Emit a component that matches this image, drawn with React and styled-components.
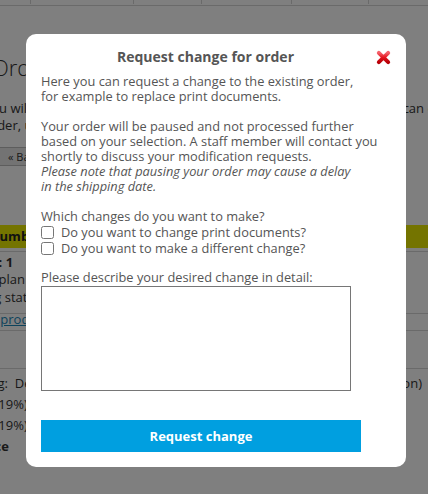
import React from 'react';
import styled, { createGlobalStyle } from "styled-components";

const GlobalStyle = createGlobalStyle`
    html, body {
        margin: 0;
        padding: 0;
        background: #ffffff;
        overflow: hidden;
    }
    body {
        font-family: "Open Sans", "Liberation Sans", sans-serif;
        color: #333;
    }
`;

function CloseIcon() {
    return (
        <svg width="15" height="15" viewBox="0 0 16 16">
            <defs>
                <linearGradient id="xg" x1="0" y1="0" x2="0" y2="1">
                    <stop offset="0" stopColor="#f4606a" />
                    <stop offset="0.5" stopColor="#e4141e" />
                    <stop offset="1" stopColor="#b80008" />
                </linearGradient>
            </defs>
            <path d="M3 3 L13 13 M13 3 L3 13" stroke="url(#xg)" strokeWidth="4.2" strokeLinecap="round" />
        </svg>
    )
}

// the order page that sits behind the dialog (scrolled a little to the right)
function BackgroundPage() {
    return (
        <Page>
            <HeaderTable>
                <HeaderCell $w={47} />
                <HeaderCell $w={103} />
                <HeaderCell $w={68} />
                <HeaderCell $w={90} />
                <HeaderCell $w={77} />
                <HeaderCell $w={95} />
            </HeaderTable>
            <PageTitle>Order details</PageTitle>
            <Intro>
                You will find all information about your order below. If you want, you can change your<br />
                order, upload new print documents or contact our service.
            </Intro>
            <BackButton>« Back</BackButton>
            <TableHead>Number</TableHead>
            <InfoBlock>
                <InfoLine $bold $shift={-4}>No: 1</InfoLine>
                <InfoLine $shift={-18}>Flyer plan A5</InfoLine>
                <InfoLine $shift={-30}>Printing status</InfoLine>
            </InfoBlock>
            <LinkRow><a>To product</a></LinkRow>
            <Spacer />
            <PriceTable>
                <PriceRow>
                    <PriceLabel $shift={-32}>Shipping:&nbsp; Deutsche Post</PriceLabel>
                    <span>(Standard option)</span>
                </PriceRow>
                <PriceRow><PriceLabel $shift={-16}>VAT (19%)</PriceLabel></PriceRow>
                <PriceRow><PriceLabel $shift={-16}>VAT (19%)</PriceLabel></PriceRow>
                <PriceRow $bold><PriceLabel $shift={-44}>Total price</PriceLabel></PriceRow>
            </PriceTable>
        </Page>
    )
}

function App() {
    return (
        <>
            <GlobalStyle />
            <BackgroundPage />
            <Overlay>
                <Modal>
                    <ModalHeader>
                        <ModalTitle>Request change for order</ModalTitle>
                        <CloseButton aria-label="close"><CloseIcon /></CloseButton>
                    </ModalHeader>
                    <Text>
                        Here you can request a change to the existing order,<br />
                        for example to replace print documents.
                    </Text>
                    <Text>
                        Your order will be paused and not processed further<br />
                        based on your selection. A staff member will contact you<br />
                        shortly to discuss your modification requests.<br />
                        <em>Please note that pausing your order may cause a delay<br />
                        in the shipping date.</em>
                    </Text>
                    <Text>
                        Which changes do you want to make?
                        <CheckRow>
                            <input type="checkbox" />
                            <span>Do you want to change print documents?</span>
                        </CheckRow>
                        <CheckRow>
                            <input type="checkbox" />
                            <span>Do you want to make a different change?</span>
                        </CheckRow>
                    </Text>
                    <FieldLabel>Please describe your desired change in detail:</FieldLabel>
                    <TextArea />
                    <SubmitButton>Request change</SubmitButton>
                </Modal>
            </Overlay>
        </>
    )
}

const Page = styled.div`
    width: 480px;
    margin-left: -16px;
    font-size: 13px;
    color: #333;
`;

const HeaderTable = styled.div`
    display: flex;
    height: 5px;
    border-bottom: 1px solid #d4d4d4;
`;

const HeaderCell = styled.div`
    width: ${p => p.$w}px;
    height: 4px;
    border-right: 1px solid #d4d4d4;
`;

const PageTitle = styled.h1`
    margin: 46px 0 0 8px;
    font-size: 22px;
    font-weight: 300;
    line-height: 30px;
    color: #333;
`;

const Intro = styled.p`
    margin: 18px 0 13px;
    line-height: 17px;
    width: 580px;
    white-space: nowrap;
`;

const BackButton = styled.div`
    width: fit-content;
    margin-left: 13px;
    padding: 0 10px;
    height: 17px;
    line-height: 17px;
    font-size: 11px;
    background: #e6e6e6;
    border: 1px solid #bbb;
`;

const TableHead = styled.div`
    margin-top: 59px;
    height: 23px;
    line-height: 23px;
    padding-left: 5px;
    background: #e8e800;
    font-weight: 700;
    color: #222;
    border-bottom: 3px solid #fff;
    box-shadow: 0 1px 0 #d4d4d4;
`;

const InfoBlock = styled.div`
    padding: 3px 0 7px 0;
    border-bottom: 1px solid #d4d4d4;
`;

const InfoLine = styled.div`
    margin-left: ${p => p.$shift}px;
    line-height: ${p => p.$bold ? 16 : 18}px;
    font-weight: ${p => p.$bold ? 700 : 400};
`;

const LinkRow = styled.div`
    height: 16px;
    line-height: 10px;
    margin-left: -2px;
    border-bottom: 1px solid #d4d4d4;

    a {
        color: #1a86b8;
        text-decoration: underline;
    }
`;

const Spacer = styled.div`
    height: 37px;
    border-bottom: 1px solid #d4d4d4;
`;

const PriceTable = styled.div`
    padding-top: 4px;
`;

const PriceRow = styled.div`
    display: flex;
    justify-content: space-between;
    padding-right: 42px;
    line-height: 21px;
    font-weight: ${p => p.$bold ? 700 : 400};
`;

const PriceLabel = styled.span`
    margin-left: ${p => p.$shift}px;
`;

const Overlay = styled.div`
    position: fixed;
    inset: 0;
    background: rgba(0, 0, 0, 0.5);
    padding: 34px 0 0 26px;
`;

const Modal = styled.div`
    box-sizing: border-box;
    width: 380px;
    padding: 15px;
    background: #fff;
    border-radius: 10px;
    color: #555;
    font-size: 12.8px;
    line-height: 15px;
`;

const ModalHeader = styled.div`
    display: flex;
    align-items: center;
    margin-bottom: 9px;
`;

const ModalTitle = styled.h2`
    flex: 1;
    margin: 0;
    text-align: center;
    font-size: 14px;
    font-weight: 700;
    line-height: 16px;
    color: #555;
`;

const CloseButton = styled.button`
    display: flex;
    margin: 0 0 0 6px;
    padding: 0;
    width: 15px;
    height: 15px;
    border: 0;
    background: none;
    cursor: pointer;
`;

const Text = styled.div`
    margin-bottom: 15px;
    white-space: nowrap;

    em {
        font-style: italic;
    }
`;

const CheckRow = styled.label`
    display: flex;
    align-items: center;
    height: 16px;

    input {
        width: 13px;
        height: 13px;
        margin: 0 7px 0 0;
    }
`;

const FieldLabel = styled.div`
    margin-top: -1px;
`;

const TextArea = styled.textarea`
    display: block;
    box-sizing: border-box;
    width: 310px;
    height: 105px;
    margin: 1px 0 0;
    border: 1px solid #767676;
    resize: none;
    font-family: inherit;
`;

const SubmitButton = styled.button`
    display: block;
    width: 320px;
    height: 32px;
    margin-top: 29px;
    border: 0;
    background: #009fe0;
    color: #fff;
    font-family: "Open Sans", "Liberation Sans", sans-serif;
    font-size: 13px;
    font-weight: 700;
    cursor: pointer;
`;

export default App;
